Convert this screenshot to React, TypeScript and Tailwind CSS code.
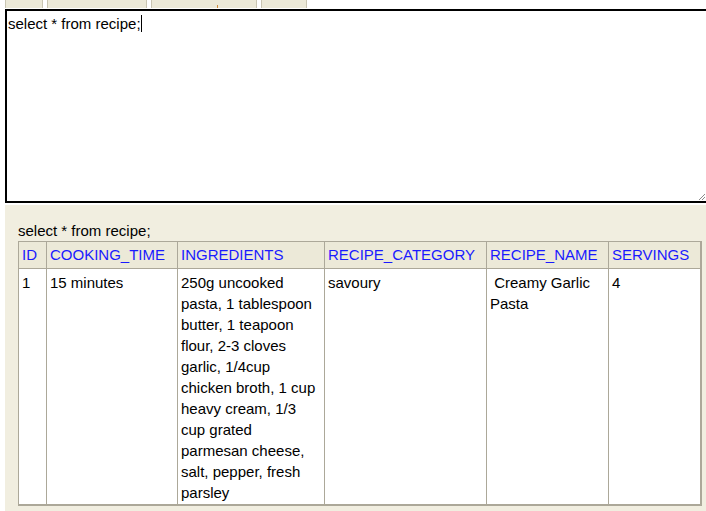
import React from "react";

const ingredients =
  "250g uncooked pasta, 1 tablespoon butter, 1 teapoon flour, 2-3 cloves garlic, 1/4cup chicken broth, 1 cup heavy cream, 1/3 cup grated parmesan cheese, salt, pepper, fresh parsley";

export default function App() {
  const headers = [
    { label: "ID", w: "w-[28px]" },
    { label: "COOKING_TIME", w: "w-[131px]" },
    { label: "INGREDIENTS", w: "w-[147px]" },
    { label: "RECIPE_CATEGORY", w: "w-[162px]" },
    { label: "RECIPE_NAME", w: "w-[122px]" },
    { label: "SERVINGS", w: "w-[93px]" },
  ];
  const row = ["1", "15 minutes", ingredients, "savoury", "\u00a0Creamy Garlic Pasta", "4"];

  return (
    <div
      className="w-[706px] h-[511px] overflow-hidden bg-white text-[15px] text-black"
      style={{ fontFamily: '"Liberation Sans", Arial, sans-serif' }}
    >
      <div className="w-[720px]">
        {/* tabs */}
        <div className="flex h-[8px] mb-[1px] pl-[5px] gap-[4px]">
          <div className="w-[38px] h-full bg-[#ece9d8] border-x border-[#c9c5b2]" />
          <div className="w-[100px] h-full bg-[#ece9d8] border-x border-[#c9c5b2]" />
          <div className="w-[106px] h-full bg-[#ece9d8] border-x border-[#c9c5b2] relative">
            <span className="absolute left-[65px] top-[5px] w-[1px] h-[3px] bg-[#d08a3a]" />
          </div>
          <div className="w-[46px] h-full bg-[#ece9d8] border-x border-[#c9c5b2]" />
        </div>

        {/* query editor */}
        <div className="ml-[5px] w-[703px] h-[194px] border-2 border-black relative pl-[1px] pt-[4px] leading-[17px]">
          <span>select * from recipe;</span>
          <span className="inline-block w-[1px] h-[17px] bg-black align-top" />
          <svg
            className="absolute right-[0px] bottom-[0px]"
            width="10"
            height="10"
            viewBox="0 0 10 10"
          >
            <line x1="9" y1="3" x2="3" y2="9" stroke="#8a8a8a" strokeWidth="1" />
            <line x1="9" y1="6" x2="6" y2="9" stroke="#8a8a8a" strokeWidth="1" />
          </svg>
        </div>

        {/* results */}
        <div className="ml-[5px] mt-[2px] w-[701px] h-[320px] bg-[#f1eee0] pl-[13px] pt-[15px]">
          <div className="leading-[21px]">select * from recipe;</div>
          <table className="table-fixed w-[684px] border-separate border-spacing-0 border-l border-t border-[#aca899] bg-white">
            <thead>
              <tr>
                {headers.map((h, i) => (
                  <th
                    key={h.label}
                    className={`${h.w} bg-[#ece9d8] text-left font-normal text-[#1a1aff] leading-[21px] pt-[2px] pb-[3px] px-[3px] border-b border-[#aca899] ${
                      i === headers.length - 1 ? "border-r-2" : "border-r"
                    }`}
                  >
                    {h.label}
                  </th>
                ))}
              </tr>
            </thead>
            <tbody>
              <tr>
                {row.map((c, i) => (
                  <td
                    key={i}
                    className={`align-top leading-[21px] pt-[3px] pb-[1px] px-[3px] border-b-2 border-[#aca899] ${
                      i === row.length - 1 ? "border-r-2" : "border-r"
                    }`}
                  >
                    {c}
                  </td>
                ))}
              </tr>
            </tbody>
          </table>
        </div>
      </div>
    </div>
  );
}
